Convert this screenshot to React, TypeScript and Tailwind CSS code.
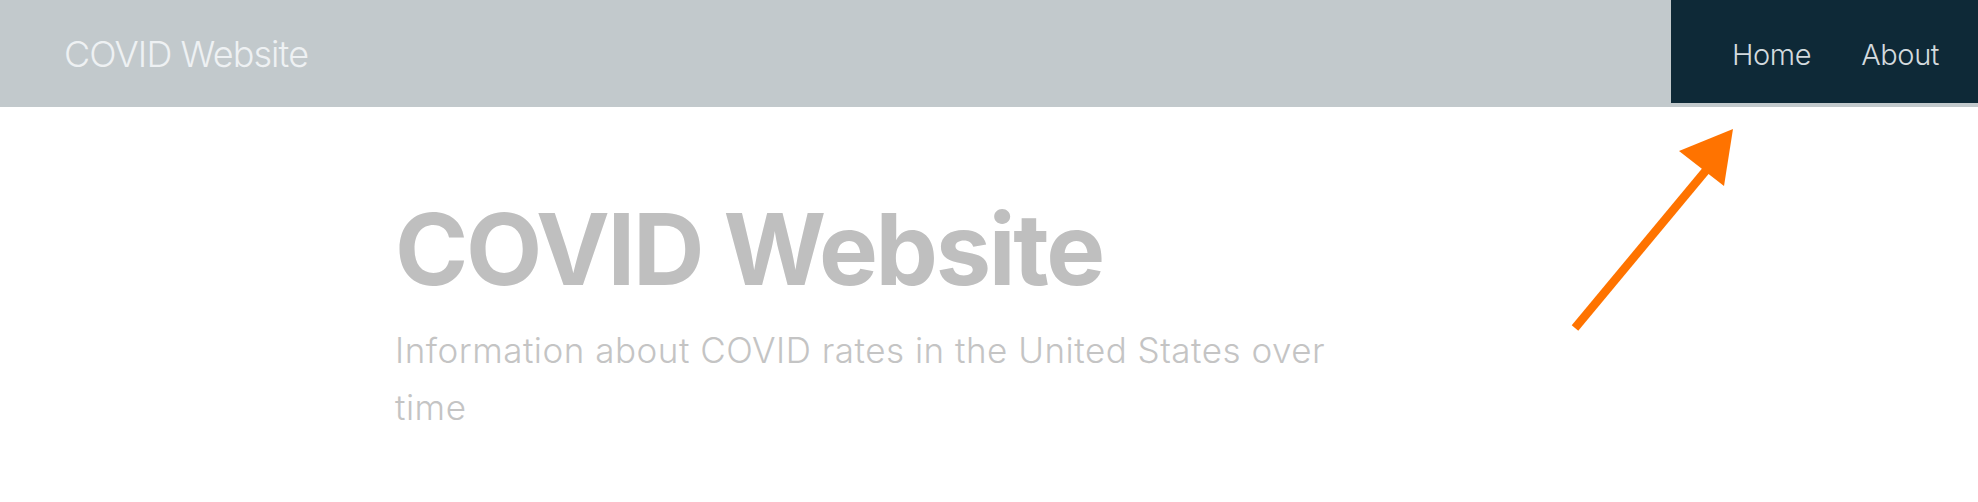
const font = { fontFamily: "Inter, 'Noto Sans', sans-serif" };

function Arrow() {
  return (
    <svg
      className="absolute left-[1560px] top-[120px]"
      width="190"
      height="220"
      viewBox="0 0 190 220"
    >
      <line x1="15" y1="208" x2="148" y2="48" stroke="#ff7300" strokeWidth="8.5" />
      <polygon points="173,9 119,31 164,66" fill="#ff7300" />
    </svg>
  );
}

export default function App() {
  return (
    <div className="relative w-[1978px] h-[502px] bg-white overflow-hidden" style={font}>
      {/* Top bar */}
      <header className="h-[107px] bg-[#c2c9cc] flex justify-between">
        <div className="flex items-center pl-[64px] text-[36px] font-light text-[#eef1f3] tracking-[-0.9px]">
          COVID Website
        </div>
        <nav className="self-start h-[103px] w-[307px] bg-[#0e2937] flex items-center pt-[6px] pl-[61px] gap-[50px] text-[29px] font-light text-[#d3dade] tracking-[-0.4px]">
          <span>Home</span>
          <span>About</span>
        </nav>
      </header>

      {/* Hero */}
      <main className="pl-[395px] pt-[93px]">
        <h1 className="text-[99px] leading-none font-bold text-[#bfbfbf] tracking-[-2.3px]">
          COVID Website
        </h1>
        <p className="mt-[23px] max-w-[960px] text-[35px] leading-[57px] font-light text-[#c4c4c4] tracking-[0.5px]">
          Information about COVID rates in the United States over time
        </p>
      </main>

      <Arrow />
    </div>
  );
}
